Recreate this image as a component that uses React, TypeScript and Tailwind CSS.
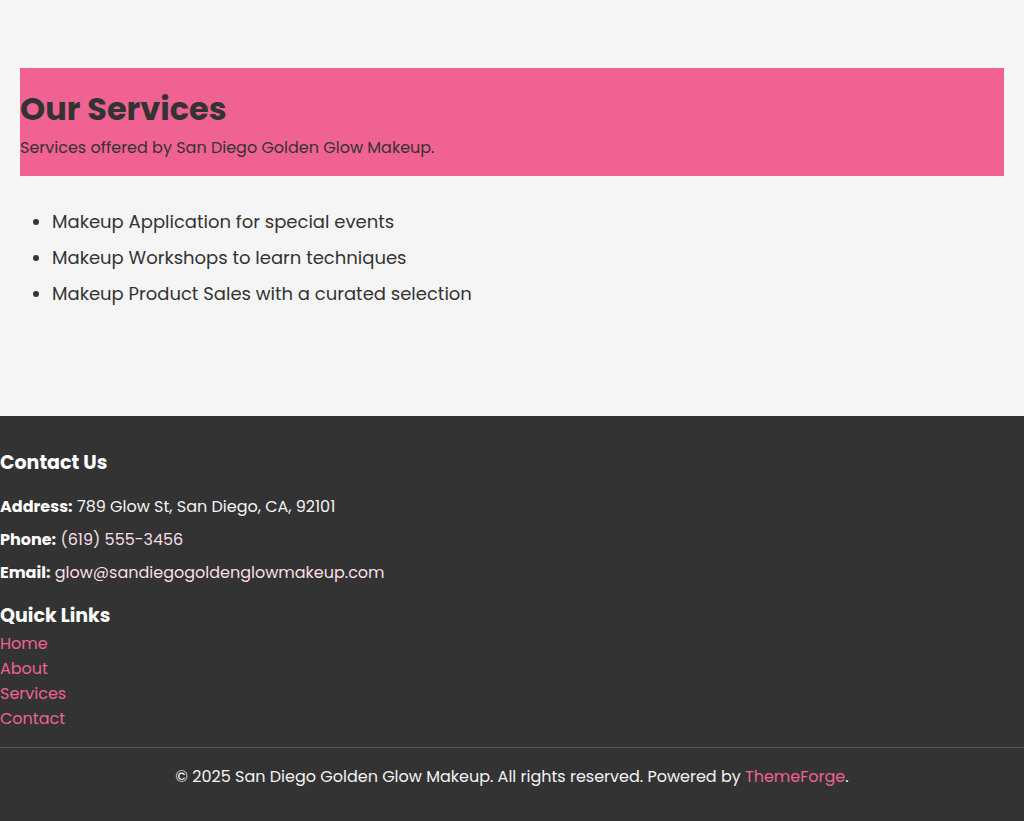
const font = { fontFamily: 'Poppins, Inter, "Noto Sans", sans-serif' };

const SERVICES = [
    'Makeup Application for special events',
    'Makeup Workshops to learn techniques',
    'Makeup Product Sales with a curated selection',
];

const LINKS = ['Home', 'About', 'Services', 'Contact'];

export default function App() {
    return (
        <div className="min-h-screen bg-[#f5f5f5] text-[#333]" style={font}>
            {/* 서비스 섹션 */}
            <main className="px-5 pt-[68px] pb-[104px]">
                <section className="bg-[#f06292] pt-[20px] pb-[13px]">
                    <h2 className="text-[32px] font-bold leading-[42px] text-[#333]">Our Services</h2>
                    <p className="text-[16px] leading-[30px] mt-[3px] text-[#333]">
                        Services offered by San Diego Golden Glow Makeup.
                    </p>
                </section>
                <ul className="list-disc pl-[32px] mt-[28px] text-[18px] leading-[36px]">
                    {SERVICES.map((s) => (
                        <li key={s}>{s}</li>
                    ))}
                </ul>
            </main>

            {/* 푸터 */}
            <footer className="bg-[#333] text-white pt-[35px] pb-[32px]">
                <h3 className="text-[19px] font-bold leading-[24px]">Contact Us</h3>
                <div className="mt-[20px] flex flex-col gap-[9px] text-[16px] leading-[24px]">
                    <p>
                        <strong className="font-bold">Address:</strong>{' '}
                        <span className="text-[#f3f3f3]">789 Glow St, San Diego, CA, 92101</span>
                    </p>
                    <p>
                        <strong className="font-bold">Phone:</strong>{' '}
                        <span className="text-[#f8dfe7]">(619) 555-3456</span>
                    </p>
                    <p>
                        <strong className="font-bold">Email:</strong>{' '}
                        <span className="text-[#f8dfe7]">glow@sandiegogoldenglowmakeup.com</span>
                    </p>
                </div>
                <h3 className="mt-[19px] text-[19px] font-bold leading-[24px]">Quick Links</h3>
                <ul className="mt-[3px] text-[16px] leading-[25px]">
                    {LINKS.map((l) => (
                        <li key={l}>
                            <a href="#" className="text-[#f06292]">{l}</a>
                        </li>
                    ))}
                </ul>
                <div className="mt-[16px] border-t border-[#555]" />
                <p className="mt-[17px] text-center text-[16px] leading-[24px] text-[#f3f3f3]">
                    © 2025 San Diego Golden Glow Makeup. All rights reserved. Powered by{' '}
                    <a href="#" className="text-[#f06292]">ThemeForge</a>.
                </p>
            </footer>
        </div>
    );
}
